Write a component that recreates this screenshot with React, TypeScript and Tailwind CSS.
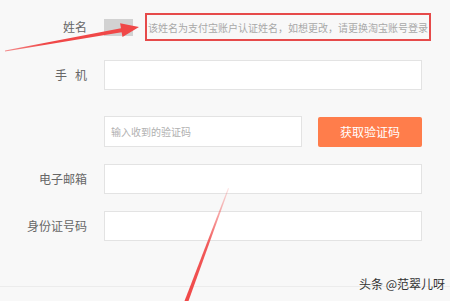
import React from 'react';

const font = { fontFamily: '"Noto Sans CJK SC", "Noto Sans", sans-serif' };

// 表单行：左侧标签右对齐，右侧内容
function Row({ label, className, children }: { label: React.ReactNode; className?: string; children: React.ReactNode }) {
  return (
    <div className={`flex items-center ${className ?? ''}`}>
      <div className="w-[87px] shrink-0 text-right text-[12px] leading-none text-[#666]">{label}</div>
      <div className="ml-[17px] flex items-center">{children}</div>
    </div>
  );
}

export default function App() {
  return (
    <div className="relative h-[301px] w-[450px] overflow-hidden bg-[#f8f8f8]" style={font}>
      <div className="pt-[13px]">
        <Row label="姓名" className="h-[28px]">
          <div className="h-[17px] w-[29px] bg-[#d2d2d2]" />
          <div className="ml-[12px] flex h-[28px] w-[286px] items-center border-2 border-[#e64a4a] pl-[1px] text-[10px] whitespace-nowrap text-[#a8a8a8]">
            该姓名为支付宝账户认证姓名，如想更改，请更换淘宝账号登录
          </div>
        </Row>

        <Row
          label={
            <span className="inline-flex gap-[8px]">
              <span>手</span>
              <span>机</span>
            </span>
          }
          className="mt-[19px]"
        >
          <div className="h-[30px] w-[318px] border border-[#e3e3e3] bg-white" />
        </Row>

        <Row label="" className="mt-[26px]">
          <div className="flex h-[31px] w-[198px] items-center border border-[#e3e3e3] bg-white pl-[6px] text-[10px] text-[#b0b0b0]">
            输入收到的验证码
          </div>
          <button className="ml-[16px] flex h-[30px] w-[104px] items-center justify-center rounded-[2px] bg-[#ff7d4b] text-[12px] text-white">
            获取验证码
          </button>
        </Row>

        <Row label="电子邮箱" className="mt-[17px]">
          <div className="h-[30px] w-[318px] border border-[#e3e3e3] bg-white" />
        </Row>

        <Row label="身份证号码" className="mt-[17px]">
          <div className="h-[30px] w-[318px] border border-[#e3e3e3] bg-white" />
        </Row>
      </div>

      <div className="mt-[45px] h-px w-full bg-[#ececec]" />

      {/* 水印 */}
      <div className="absolute left-[359px] top-[276px] text-[12px] leading-[16px] text-[#333]">头条 @范翠儿呀</div>

      {/* 红色标注箭头 */}
      <svg className="pointer-events-none absolute left-0 top-0" width="450" height="301" viewBox="0 0 450 301">
        <defs>
          <linearGradient id="fade1" x1="0" y1="0" x2="1" y2="0">
            <stop offset="0" stopColor="#f04848" stopOpacity="0.6" />
            <stop offset="0.3" stopColor="#f04848" stopOpacity="1" />
          </linearGradient>
          <linearGradient id="fade2" x1="0" y1="0" x2="0" y2="1">
            <stop offset="0" stopColor="#f04848" stopOpacity="0.15" />
            <stop offset="0.5" stopColor="#f04848" stopOpacity="0.9" />
            <stop offset="1" stopColor="#f04848" stopOpacity="1" />
          </linearGradient>
        </defs>
        <polygon
          points="5,51.5 121.6,32.2 122.5,37.1 139,27 120.1,23.3 121,28.2 5,50.5"
          fill="url(#fade1)"
        />
        <polygon points="228,188 229,188.5 188.5,301 184.5,301" fill="url(#fade2)" />
      </svg>
    </div>
  );
}
